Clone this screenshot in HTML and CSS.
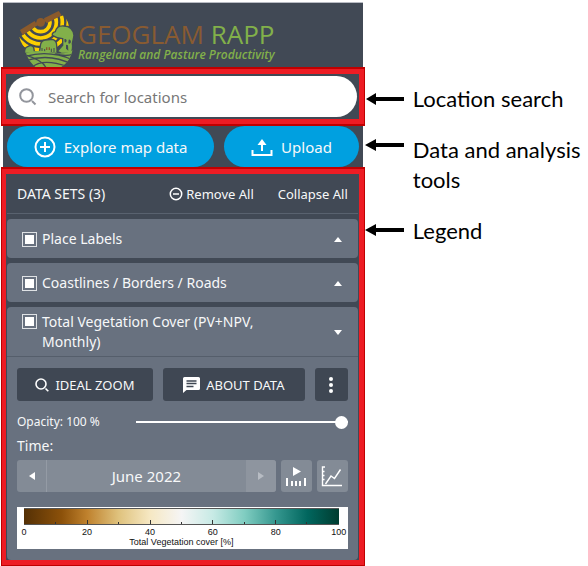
FILE: index.html
```html
<!DOCTYPE html>
<html lang="en">
<head>
<meta charset="utf-8">
<meta name="viewport" content="width=device-width, initial-scale=1">
<title>GEOGLAM RAPP</title>
<link rel="stylesheet" href="styles.css">
</head>
<body>
<div class="guide">
  <main class="app">
    <header class="brand">
      <svg class="brand-logo" viewBox="0 0 180 177" aria-hidden="true">
        <defs>
          <clipPath id="fan"><path d="M4 88 L68 46 L136 22 Q154 40 153 66 L150 130 L30 130 Q10 112 4 88Z"/></clipPath>
          <clipPath id="field"><path d="M24 136 Q60 122 102 134 Q140 142 164 126 Q158 158 130 177 L52 177 Q32 160 24 136Z"/></clipPath>
        </defs>
        <g clip-path="url(#fan)" fill="none" stroke="#fdd000" stroke-width="11">
          <circle cx="68" cy="43" r="28"/>
          <circle cx="68" cy="43" r="47"/>
          <circle cx="68" cy="43" r="65"/>
          <circle cx="68" cy="43" r="83"/>
        </g>
        <g stroke="#414955" stroke-width="4">
          <path d="M20 136 Q18 120 29 116 Q40 108 47 118 L50 136Z" fill="#82b04a"/>
          <path d="M64 134 L68 108 Q72 96 82 96 L104 94 Q116 98 116 112 L118 136Z" fill="#82b04a"/>
          <path d="M103 82 Q101 74 112 71 Q116 52 138 54 Q164 54 168 82 Q166 94 163 106 Q166 124 158 136 L130 136 L118 130 L134 112 L134 92 Q118 92 103 82Z" fill="#82b04a"/>
        </g>
        <path d="M139 94 Q145 90 146 98 Q145 104 140 103Z M152 95 Q158 92 159 102 Q156 110 151 106Z M144 110 L150 112 L151 128 L144 122Z" fill="#414955"/>
        <path d="M72 132v-12m8 12v-9m20 9v-10m8 10v-12" fill="none" stroke="#414955" stroke-width="3"/>
        <path d="M86 126v-8m8 8v-8" fill="none" stroke="#8b5a2b" stroke-width="4"/>
        <g clip-path="url(#field)">
          <path d="M20 120h148v57H20z" fill="#82b04a"/>
          <path d="M20 146 Q90 124 166 156 M24 158 Q96 134 164 170 M40 180 Q70 148 150 176 M84 180 Q76 158 26 142 M112 136 Q140 148 166 138" fill="none" stroke="#414955" stroke-width="4"/>
        </g>
        <g fill="#8b5a2b">
          <path d="M6 66 L50 39 L58 52 L14 82Z"/>
          <path d="M78 31 L122 9 L131 22 L86 46Z"/>
          <path d="M50 46 L84 32 L87 39 L54 54Z"/>
          <circle cx="68" cy="43" r="13"/>
        </g>
      </svg>
      <div class="brand-text">
        <h1 class="brand-name">GEOGLAM <span class="brand-accent">RAPP</span></h1>
        <p class="brand-tagline">Rangeland and Pasture Productivity</p>
      </div>
    </header>

    <section class="frame">
      <form class="search" role="search">
        <label class="search-label" for="location" aria-label="Location">
          <svg class="icon-search" viewBox="0 0 18 18" aria-hidden="true"><circle cx="7.5" cy="7.5" r="6.3"/><path d="M13 13l3.500 3.500"/></svg>
        </label>
        <input class="search-input" id="location" type="search" placeholder="Search for locations">
      </form>
    </section>

    <div class="actions">
      <button class="action action-wide" type="button">
        <svg class="icon-action" viewBox="0 0 22 22" aria-hidden="true"><circle cx="11" cy="11" r="9.500"/><path d="M11 6v10M6 11h10"/></svg>
        Explore map data
      </button>
      <button class="action" type="button">
        <svg class="icon-action" viewBox="0 0 22 22" aria-hidden="true"><path d="M1.500 14v5h19v-5M11 15V8"/><path class="solid" d="M6.500 9L11 3l4.500 6z"/></svg>
        Upload
      </button>
    </div>

    <section class="frame">
      <div class="legend">
        <div class="legend-head">
          <h2 class="legend-title">DATA SETS (3)</h2>
          <button class="link-button" type="button">
            <svg class="icon-remove" viewBox="0 0 14 14" aria-hidden="true"><circle cx="7" cy="7" r="5.700"/><path d="M4 7h6"/></svg>
            Remove All
          </button>
          <button class="link-button" type="button">Collapse All</button>
        </div>

        <article class="card">
          <div class="card-head">
            <input class="tick" id="labels" type="checkbox" checked>
            <label class="card-name" for="labels">Place Labels</label>
            <button class="toggle" type="button" aria-label="Expand"><svg class="caret" viewBox="0 0 8 5"><path d="M0 5L4 0l4 5z"/></svg></button>
          </div>
        </article>

        <article class="card">
          <div class="card-head">
            <input class="tick" id="coast" type="checkbox" checked>
            <label class="card-name" for="coast">Coastlines / Borders / Roads</label>
            <button class="toggle" type="button" aria-label="Expand"><svg class="caret" viewBox="0 0 8 5"><path d="M0 5L4 0l4 5z"/></svg></button>
          </div>
        </article>

        <article class="card">
          <div class="card-head card-head-open">
            <input class="tick" id="cover" type="checkbox" checked>
            <label class="card-name" for="cover">Total Vegetation Cover (PV+NPV, Monthly)</label>
            <button class="toggle" type="button" aria-label="Collapse"><svg class="caret" viewBox="0 0 8 5"><path d="M0 0l4 5 4-5z"/></svg></button>
          </div>
          <div class="card-body">
            <div class="tools">
              <button class="tool tool-zoom" type="button">
                <svg class="icon-zoom" viewBox="0 0 14 14" aria-hidden="true"><circle cx="6" cy="6" r="5"/><path d="M10.500 10.500l2.800 2.800"/></svg>
                IDEAL ZOOM
              </button>
              <button class="tool tool-about" type="button">
                <svg class="icon-about" viewBox="0 0 17 16" aria-hidden="true"><path class="bubble" d="M1.500 0h14Q17 0 17 1.500v10q0 1.500-1.500 1.500H3.500L0 16V1.500Q0 0 1.500 0z"/><path class="lines" d="M3.500 4h10M3.500 6.500h10M3.500 9.500h7"/></svg>
                ABOUT DATA
              </button>
              <button class="tool tool-more" type="button" aria-label="More">
                <svg class="icon-more" viewBox="0 0 4 18"><circle cx="2" cy="3" r="2"/><circle cx="2" cy="9" r="2"/><circle cx="2" cy="15" r="2"/></svg>
              </button>
            </div>

            <div class="opacity">
              <label class="opacity-label" for="opacity">Opacity: 100 %</label>
              <input class="slider" id="opacity" type="range" min="0" max="100" value="100">
            </div>

            <div class="time-label">Time:</div>
            <div class="time">
              <div class="stepper">
                <button class="step" type="button" aria-label="Previous"><svg class="icon-step" viewBox="0 0 6 8"><path d="M6 0v8L0 4z"/></svg></button>
                <button class="period" type="button">June 2022</button>
                <button class="step step-next" type="button" aria-label="Next" disabled><svg class="icon-step" viewBox="0 0 6 8"><path d="M0 0v8l6-4z"/></svg></button>
              </div>
              <button class="square" type="button" aria-label="Animate">
                <svg class="icon-animate" viewBox="0 0 22 21"><path d="M8 1v9l8-4.500z"/><path d="M1 12h2v8H1zM6 15h2v5H6zM10 15h2v5h-2zM14 15h2v5h-2zM19 12h2v8h-2z"/></svg>
              </button>
              <button class="square" type="button" aria-label="Chart">
                <svg class="icon-chart" viewBox="0 0 22 21"><path d="M4 1H1.500v18.500H21M1.500 5.500H3.500M1.500 9.500H3.500M1.500 13.500H3.500"/><path d="M4.500 18l5.500-8 3.500 2.500 6-9"/></svg>
              </button>
            </div>

            <figure class="scale">
              <div class="ramp">
                <i class="mark mark-edge"></i><i class="mark"></i><i class="mark mark-major"></i><i class="mark"></i><i class="mark mark-major"></i><i class="mark"></i><i class="mark mark-major"></i><i class="mark"></i><i class="mark mark-major"></i><i class="mark"></i><i class="mark mark-edge"></i>
              </div>
              <div class="values"><span class="value">0</span><span class="value">20</span><span class="value">40</span><span class="value">60</span><span class="value">80</span><span class="value">100</span></div>
              <figcaption class="scale-name">Total Vegetation cover [%]</figcaption>
            </figure>
          </div>
        </article>
      </div>
    </section>
  </main>

  <aside class="notes">
    <div class="note">
      <svg class="arrow" viewBox="0 0 40 30" aria-hidden="true"><path d="M1 15L11 9v4h28v4H11v4z"/></svg>
      <p class="note-text">Location search</p>
    </div>
    <div class="note">
      <svg class="arrow" viewBox="0 0 40 30" aria-hidden="true"><path d="M0 10L11 4v4h28v4H11v4z"/></svg>
      <p class="note-text">Data and analysis tools</p>
    </div>
    <div class="note">
      <svg class="arrow" viewBox="0 0 40 30" aria-hidden="true"><path d="M0 14L11 8v4h28v4H11v4z"/></svg>
      <p class="note-text">Legend</p>
    </div>
  </aside>
</div>
</body>
</html>
```
FILE: styles.css
```css
:root {
  --navy: #414955;
  --slate: #68717f;
  --dark: #3f4753;
  --glass: #838b96;
  --blue: #00a0e0;
  --ink: #f7f8f9;
}

* { box-sizing: border-box; }

body {
  margin: 0;
  background: #fff;
  color: var(--ink);
  font: 14px/20px "Noto Sans", sans-serif;
}

h1, h2, p, figure { margin: 0; }

button {
  border: 0;
  padding: 0;
  background: none;
  color: inherit;
  font: inherit;
  cursor: pointer;
}

svg { display: block; flex: none; }

.guide {
  display: grid;
  grid-template-columns: minmax(0, 1.63fr) minmax(0, 1fr);
  padding: 2px 0 0 1px;
}

/* Header */
.brand {
  display: flex;
  margin: 0 2px;
  padding: 5px 15px 0;
  border-top: 1px solid #b9bcc4;
  background: var(--navy);
}
.brand-logo { width: 60px; height: 59px; }
.brand-text { padding-top: 13px; }
.brand-name {
  color: #895b31;
  font: 400 26px/26px "Open Sans", sans-serif;
  white-space: nowrap;
}
.brand-accent { color: #82b04a; }
.brand-tagline {
  color: #82b04a;
  font: italic 600 12px/16px "Open Sans", sans-serif;
  white-space: nowrap;
}

/* Highlighted regions */
.frame {
  border: 2px solid #c00000;
  border-left-width: 1px;
  border-right-width: 1px;
  background: #ed1c24;
  padding: 5px 5px 5px 4px;
}

/* Search */
.search {
  display: flex;
  align-items: center;
  height: 45px;
  padding: 2px;
  background: var(--navy);
}
.search-label {
  display: flex;
  align-items: center;
  height: 41px;
  padding: 0 11px 0 11px;
  border-radius: 21px 0 0 21px;
  background: #fff;
}
.icon-search { width: 18px; height: 18px; fill: none; stroke: #92959c; stroke-width: 2; }
.search-input {
  flex: 1;
  min-width: 0;
  height: 41px;
  border: 0;
  border-radius: 0 21px 21px 0;
  padding: 0;
  background: #fff;
  color: #333;
  font: 15px/20px "Noto Sans", sans-serif;
  outline: 0;
}
.search-input::placeholder { color: #777; opacity: 1; }

/* Main actions */
.actions {
  display: flex;
  gap: 10px;
  margin: 0 2px;
  padding: 0 4px;
  background: var(--navy);
}
.action {
  display: flex;
  flex: 13;
  align-items: center;
  justify-content: center;
  gap: 8px;
  height: 41px;
  border-radius: 21px;
  background: var(--blue);
  font-size: 15px;
  white-space: nowrap;
}
.action-wide { flex: 20; }
.icon-action { width: 22px; height: 22px; fill: none; stroke: #fff; stroke-width: 2; }
.icon-action .solid { fill: #fff; stroke: none; }

/* Legend */
.legend {
  display: grid;
  gap: 5px;
  padding: 0 1px;
  background: var(--navy);
}
.legend-head {
  display: flex;
  align-items: center;
  gap: 24px;
  height: 40px;
  padding: 0 10px;
  border-bottom: 1px solid #59626f;
  font-size: 13px;
}
.legend-title { margin-right: auto; font-size: 14px; font-weight: 400; }
.link-button { display: flex; align-items: center; gap: 3px; white-space: nowrap; }
.icon-remove { width: 14px; height: 14px; fill: none; stroke: #fff; stroke-width: 1.5; }

.card { border-radius: 4px; background: var(--slate); }
.card-head {
  display: flex;
  align-items: center;
  gap: 5px;
  padding: 10px 16px 9px 15px;
}
.card-head-open {
  align-items: flex-start;
  padding: 5px 16px 4px 15px;
  border-bottom: 1px solid #555e6b;
}
.card-head-open .toggle { align-self: center; }
.card-name { flex: 1; padding-right: 40px; }
.tick {
  appearance: none;
  flex: none;
  width: 15px;
  height: 15px;
  margin: 0;
  border: 1px solid #dfe2e5;
  padding: 2px;
  background: #fff content-box;
}
.card-head-open .tick { margin-top: 2px; }
.caret { width: 8px; height: 5px; fill: #fff; }

.card-body { padding: 11px 10px; }

.tools { display: flex; gap: 10px; }
.tool {
  display: flex;
  align-items: center;
  justify-content: center;
  gap: 6px;
  height: 33px;
  border-radius: 3px;
  background: var(--dark);
  font-size: 13px;
  white-space: nowrap;
}
.tool-zoom { flex: 136; }
.tool-about { flex: 142; }
.tool-more { flex: none; width: 33px; }
.icon-zoom { width: 14px; height: 14px; fill: none; stroke: #fff; stroke-width: 1.6; }
.icon-about { width: 17px; height: 16px; }
.bubble { fill: #fff; }
.lines { fill: none; stroke: var(--dark); stroke-width: 1.3; }
.icon-more { width: 4px; height: 18px; fill: #fff; }

.opacity { display: flex; align-items: center; gap: 36px; margin-top: 11px; }
.opacity-label { font-size: 12px; white-space: nowrap; }
.slider {
  appearance: none;
  flex: 1;
  min-width: 0;
  height: 14px;
  margin: 0;
  background: linear-gradient(#fff, #fff) center / 100% 2px no-repeat;
}
.slider::-webkit-slider-thumb {
  appearance: none;
  width: 13px;
  height: 13px;
  border-radius: 50%;
  background: #fff;
}
.slider::-moz-range-thumb { width: 13px; height: 13px; border: 0; border-radius: 50%; background: #fff; }

.time-label { margin: 4px 0; }
.time { display: flex; gap: 5px; }
.stepper {
  display: flex;
  flex: 1;
  overflow: hidden;
  border-radius: 3px;
  background: var(--glass);
}
.step {
  display: grid;
  place-items: center;
  width: 30px;
  height: 32px;
  border-right: 1px solid #949ba5;
}
.step-next { border: 0; background: #8e959f; cursor: default; }
.icon-step { width: 6px; height: 8px; fill: #fff; }
.step-next .icon-step { fill: #b7bcc3; }
.period { flex: 1; font-size: 15px; }
.square {
  display: grid;
  place-items: center;
  width: 31px;
  height: 32px;
  border-radius: 3px;
  background: var(--glass);
}
.icon-animate { width: 22px; height: 21px; fill: #fff; }
.icon-chart { width: 22px; height: 21px; fill: none; stroke: #fff; stroke-width: 1.4; }

/* Colour scale */
.scale {
  margin-top: 15px;
  padding: 1px 9px 0 7px;
  background: #fff;
  color: #111;
  font: 9px/10px "Liberation Sans", sans-serif;
}
.ramp {
  display: flex;
  align-items: flex-end;
  justify-content: space-between;
  height: 17px;
  border-top: 1px solid #555;
  border-bottom: 1px solid #555;
  background: linear-gradient(90deg, #543005, #8c510a 12%, #bf812d 20%, #dfc27d 30%, #f6e8c3 40%, #f5f5f5 50%, #c7eae5 60%, #80cdc1 70%, #35978f 80%, #01665e 90%, #003c30);
}
.mark { width: 1px; height: 2px; background: #333; }
.mark-major { height: 4px; }
.mark-edge { height: 0; }
.values { display: flex; justify-content: space-between; margin: 2px -12px 0; }
.value { width: 24px; text-align: center; }
.scale-name { padding-bottom: 2px; text-align: center; }

/* Explanations */
.notes {
  display: flex;
  flex-direction: column;
  gap: 21px;
  padding-top: 82px;
  color: #000;
}
.note { display: flex; gap: 8px; }
.arrow { width: 40px; height: 30px; fill: #000; }
.note-text { font: 22px/30px Lato, sans-serif; }
```
